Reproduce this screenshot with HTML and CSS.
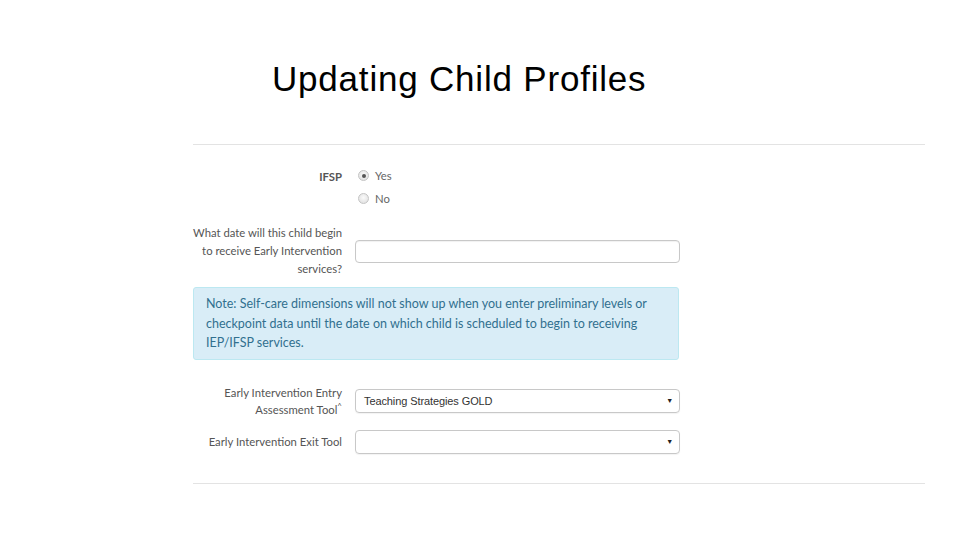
FILE: index.html
```html
<!DOCTYPE html>
<html>
<head>
<meta charset="utf-8">
<link rel="stylesheet" href="styles.css">
</head>
<body>
<h1 class="title">Updating Child Profiles</h1>
<div class="panel">
  <div class="row row-ifsp">
    <div class="label bold">IFSP</div>
    <div class="radios">
      <div class="radio-line"><span class="radio checked"></span><span>Yes</span></div>
      <div class="radio-line"><span class="radio"></span><span>No</span></div>
    </div>
  </div>
  <div class="row row-date">
    <div class="label">What date will this child begin<br>to receive Early Intervention<br>services?</div>
    <div class="input"></div>
  </div>
  <div class="alert">Note: Self-care dimensions will not show up when you enter preliminary levels or checkpoint data until the date on which child is scheduled to begin to receiving IEP/IFSP services.</div>
  <div class="row row-entry">
    <div class="label">Early Intervention Entry<br>Assessment Tool<sup>^</sup></div>
    <div class="select"><span class="select-text">Teaching Strategies GOLD</span><span class="arrow">▼</span></div>
  </div>
  <div class="row row-exit">
    <div class="label">Early Intervention Exit Tool</div>
    <div class="select"><span class="select-text"></span><span class="arrow">▼</span></div>
  </div>
</div>
</body>
</html>
```

FILE: styles.css
```css
html, body {
  margin: 0;
  padding: 0;
  background: #fff;
}
body {
  width: 960px;
  height: 540px;
  overflow: hidden;
}
.title {
  margin: 0;
  padding: 59px 0 0 272px;
  font-family: "Liberation Sans", Arial, sans-serif;
  font-weight: normal;
  font-size: 35px;
  letter-spacing: 0.8px;
  line-height: 40px;
  color: #000;
}
.panel {
  margin: 45px 0 0 193px;
  width: 732px;
  border-top: 1px solid #e3e3e3;
  border-bottom: 1px solid #e3e3e3;
  padding: 18px 0 29px 0;
  font-family: Lato, "Open Sans", sans-serif;
  font-size: 11.3px;
  color: #555;
}
.row {
  display: grid;
  grid-template-columns: 149px 325px;
  column-gap: 13px;
  align-items: center;
}
.label {
  text-align: right;
  line-height: 18px;
  white-space: nowrap;
}
.bold {
  font-weight: bold;
  color: #555;
}
.row-ifsp {
  align-items: start;
  padding-top: 1px;
}
.row-ifsp .label {
  line-height: 23px;
  padding-top: 1px;
}
.radios {
  display: flex;
  flex-direction: column;
}
.radio-line {
  display: flex;
  align-items: center;
  height: 23px;
  padding-left: 3px;
  color: #666;
}
.radio {
  width: 9px;
  height: 9px;
  border-radius: 50%;
  border: 1px solid #c4c4c4;
  background: radial-gradient(circle at 50% 40%, #fafafa 0, #dcdcdc 100%);
  margin-right: 6px;
  position: relative;
  box-sizing: content-box;
}
.radio.checked::after {
  content: "";
  position: absolute;
  left: 2.5px;
  top: 2.5px;
  width: 4px;
  height: 4px;
  border-radius: 50%;
  background: #555;
}
.row-date {
  margin-top: 14px;
}
.input {
  height: 21px;
  border: 1px solid #c8c8c8;
  border-radius: 4px;
  box-shadow: inset 0 1px 1px rgba(0,0,0,0.06);
}
.alert {
  margin-top: 9px;
  width: 460px;
  padding: 6px 12px 6px 12px;
  background: #d9edf7;
  border: 1px solid #bce8f1;
  border-radius: 3px;
  color: #31708f;
  font-size: 12.5px;
  line-height: 19.5px;
}
.row-entry {
  margin-top: 23px;
}
.row-entry .label {
  line-height: 17.5px;
  padding-top: 1px;
}
sup {
  font-size: 8px;
  line-height: 0;
  vertical-align: 5px;
}
.select {
  height: 22px;
  border: 1px solid #c8c8c8;
  border-radius: 4px;
  display: flex;
  align-items: center;
  justify-content: space-between;
  padding: 0 6px 0 8px;
  font-family: "Liberation Sans", Arial, sans-serif;
  font-size: 11px;
  letter-spacing: -0.1px;
  color: #333;
  box-shadow: 0 1px 1px rgba(0,0,0,0.05);
}
.arrow {
  font-size: 7px;
  color: #222;
}
.row-exit {
  margin-top: 11px;
}
```
